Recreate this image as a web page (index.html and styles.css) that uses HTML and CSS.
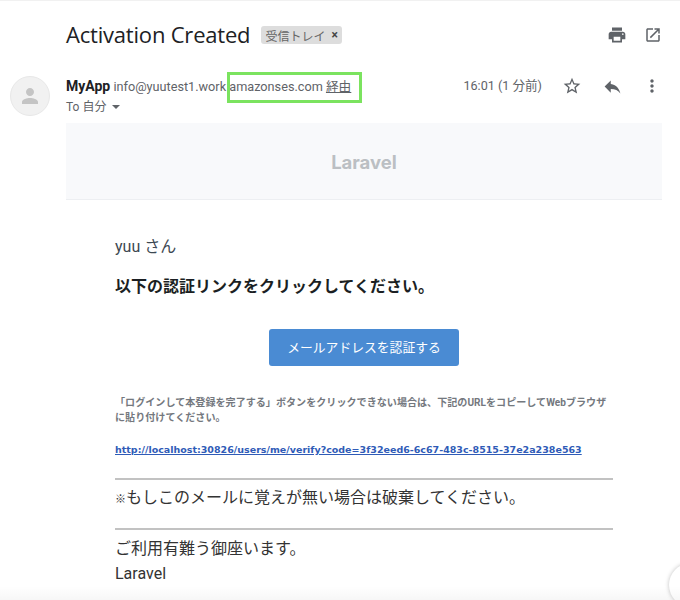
FILE: index.html
```html
<!DOCTYPE html>
<html lang="ja">
<head>
<meta charset="utf-8">
<title>Activation Created</title>
<link rel="stylesheet" href="styles.css">
</head>
<body>
<div class="page">
  <header class="subject-row">
    <h1 class="subject">Activation Created</h1>
    <span class="label">受信トレイ<span class="label-x">×</span></span>
    <span class="spacer"></span>
    <svg class="icon print" viewBox="0 0 24 24"><path d="M19 8H5c-1.66 0-3 1.34-3 3v6h4v4h12v-4h4v-6c0-1.66-1.34-3-3-3zm-3 11H8v-5h8v5zm3-7c-.55 0-1-.45-1-1s.45-1 1-1 1 .45 1 1-.45 1-1 1zm-1-9H6v4h12V3z"/></svg>
    <svg class="icon open" viewBox="0 0 24 24"><path d="M19 19H5V5h7V3H5c-1.11 0-2 .9-2 2v14c0 1.1.89 2 2 2h14c1.1 0 2-.9 2-2v-7h-2v7zM14 3v2h3.59l-9.83 9.83 1.41 1.41L19 6.41V10h2V3h-7z"/></svg>
  </header>
  <div class="sender-row">
    <div class="avatar">
      <svg viewBox="0 0 24 24"><path d="M12 12c2.2 0 4-1.8 4-4s-1.8-4-4-4-4 1.8-4 4 1.800 4 4 4zm0 2c-2.700 0-8 1.340-8 4v2h16v-2c0-2.660-5.300-4-8-4z"/></svg>
    </div>
    <div class="sender-info">
      <div class="from"><b class="name">MyApp</b> <span class="addr">info@yuutest1.work</span> <span class="via">amazonses.com <u>経由</u></span></div>
      <div class="to">To 自分 <span class="caret"></span></div>
    </div>
    <span class="time">16:01 (1 分前)</span>
    <svg class="icon star" viewBox="0 0 24 24"><path d="M22 9.240l-7.190-.62L12 2 9.190 8.630 2 9.240l5.460 4.730L5.820 21 12 17.270 18.180 21l-1.630-7.030L22 9.240zM12 15.400l-3.760 2.270 1-4.280-3.320-2.880 4.380-.38L12 6.100l1.710 4.040 4.380.38-3.320 2.880 1 4.280L12 15.400z"/></svg>
    <svg class="icon reply" viewBox="0 0 24 24"><path d="M10 9V5l-7 7 7 7v-4.100c5 0 8.500 1.600 11 5.100-1-5-4-10-11-11z"/></svg>
    <svg class="icon more" viewBox="0 0 24 24"><path d="M12 8c1.100 0 2-.9 2-2s-.9-2-2-2-2 .9-2 2 .9 2 2 2zm0 2c-1.100 0-2 .9-2 2s.9 2 2 2 2-.9 2-2-.9-2-2-2zm0 6c-1.100 0-2 .9-2 2s.9 2 2 2 2-.9 2-2-.9-2-2-2z"/></svg>
  </div>
  <div class="mail">
    <div class="brand">Laravel</div>
    <div class="content">
      <p class="greet">yuu さん</p>
      <p class="lead">以下の認証リンクをクリックしてください。</p>
      <div class="action"><a class="button">メールアドレスを認証する</a></div>
      <p class="small">「ログインして本登録を完了する」ボタンをクリックできない場合は、下記のURLをコピーしてWebブラウザに貼り付けてください。</p>
      <a class="url">http://localhost:30826/users/me/verify?code=3f32eed6-6c67-483c-8515-37e2a238e563</a>
      <hr class="rule first">
      <p class="note"><span class="mark">※</span>もしこのメールに覚えが無い場合は破棄してください。</p>
      <hr class="rule">
      <p class="sign">ご利用有難う御座います。</p>
      <p class="sign">Laravel</p>
    </div>
  </div>
  <div class="highlight"></div>
  <div class="fab"></div>
  <div class="shade"></div>
</div>
</body>
</html>
```
FILE: styles.css
```css
* { box-sizing: border-box; }
html, body { margin: 0; height: 100%; background: #fff; }
body { font-family: Roboto, "Noto Sans CJK JP", sans-serif; color: #222; overflow: hidden; }
.page { position: relative; width: 680px; height: 600px; overflow: hidden; border-top: 1px solid #f1f1f1; }
.subject-row { display: flex; align-items: center; height: 40px; margin-top: 13px; padding: 0 18px 0 66px; }
.subject { margin: 0; font: 400 22px/28px "Open Sans", sans-serif; color: #202124; letter-spacing: -.2px; }
.label { display: inline-flex; align-items: center; height: 18px; margin: 2px 0 0 11px; padding: 0 4px; border-radius: 3px; background: #dddddd; color: #666; font-size: 12px; }
.label-x { margin-left: 6px; font-weight: 700; color: #444; }
.spacer { flex: 1; }
.icon { width: 20px; height: 20px; fill: #5f6368; display: block; }
.print { margin-top: 2px; }
.open { margin: 2px 0 0 17px; width: 18px; height: 18px; }
.sender-row { display: flex; align-items: flex-start; height: 47px; margin-top: 22px; padding: 0 18px 0 10px; }
.avatar { width: 40px; height: 40px; border-radius: 50%; background: #f1f1f1; border: 1px solid #e8e8e8; display: flex; align-items: center; justify-content: center; }
.avatar svg { width: 24px; height: 24px; fill: #c4c4c4; }
.sender-info { flex: 1; margin-left: 16px; font-size: 12.7px; line-height: 20px; color: #5f6368; }
.from { white-space: nowrap; height: 20px; }
.name { font-weight: 700; color: #202124; font-size: 14px; }
.to { margin-top: 1px; font-size: 12px; }
.caret { display: inline-block; margin-left: 3px; vertical-align: 2px; border: 4px solid transparent; border-top-color: #5f6368; border-bottom: 0; }
.time { font-size: 12.6px; line-height: 20px; color: #5f6368; }
.star { margin: 0 0 0 20px; }
.reply { margin: 0 0 0 20px; width: 21px; height: 21px; }
.more { margin: 0 0 0 19px; }
.mail { margin: 0 18px 0 66px; }
.brand { height: 77px; padding-top: 1px; background: #f8f9fb; border-bottom: 1px solid #edeff2; display: flex; align-items: center; justify-content: center; font: 700 18.500px Inter, sans-serif; color: #bbbfc3; }
.content { padding: 36px 49px 0; }
.content p { margin: 0; }
.greet { font-size: 16px; line-height: 22px; color: #3d4852; }
.lead { margin-top: 18px !important; font-size: 16px; line-height: 22px; font-weight: 700; color: #1b1f23; }
.action { display: flex; justify-content: center; margin-top: 31px; }
.button { display: block; width: 190px; height: 37px; line-height: 37px; text-align: center; border-radius: 3px; background: #4a8bd3; color: #fff; font-size: 12.800px; }
.small { margin-top: 29px !important; font-size: 10.080px; line-height: 15px; font-weight: 700; color: #74787e; }
.url { display: block; margin-top: 17px; font: 700 9.500px/16px "DejaVu Sans", sans-serif; color: #2f5bb7; text-decoration: underline; white-space: nowrap; }
.rule { margin: 20px 0 0; border: 0; height: 2px; background: #c2c2c2; }
.note { margin-top: 7px !important; font-size: 16px; line-height: 22px; color: #333; }
.mark { font-size: 11px; }
.rule:not(.first) { margin-top: 17px; }
.sign { font-size: 16px; line-height: 25px; color: #333; }
.rule + .sign { margin-top: 6px !important; }
.highlight { position: absolute; left: 227px; top: 71px; width: 135px; height: 31px; border: 3px solid #7be35f; }
.fab { position: absolute; left: 669px; top: 562px; width: 44px; height: 44px; border-radius: 50%; background: #fff; box-shadow: 0 0 4px rgba(0,0,0,.25); }
.shade { position: absolute; left: 0; right: 0; bottom: 0; height: 14px; background: linear-gradient(rgba(0,0,0,0), rgba(0,0,0,.03)); pointer-events: none; }
```
